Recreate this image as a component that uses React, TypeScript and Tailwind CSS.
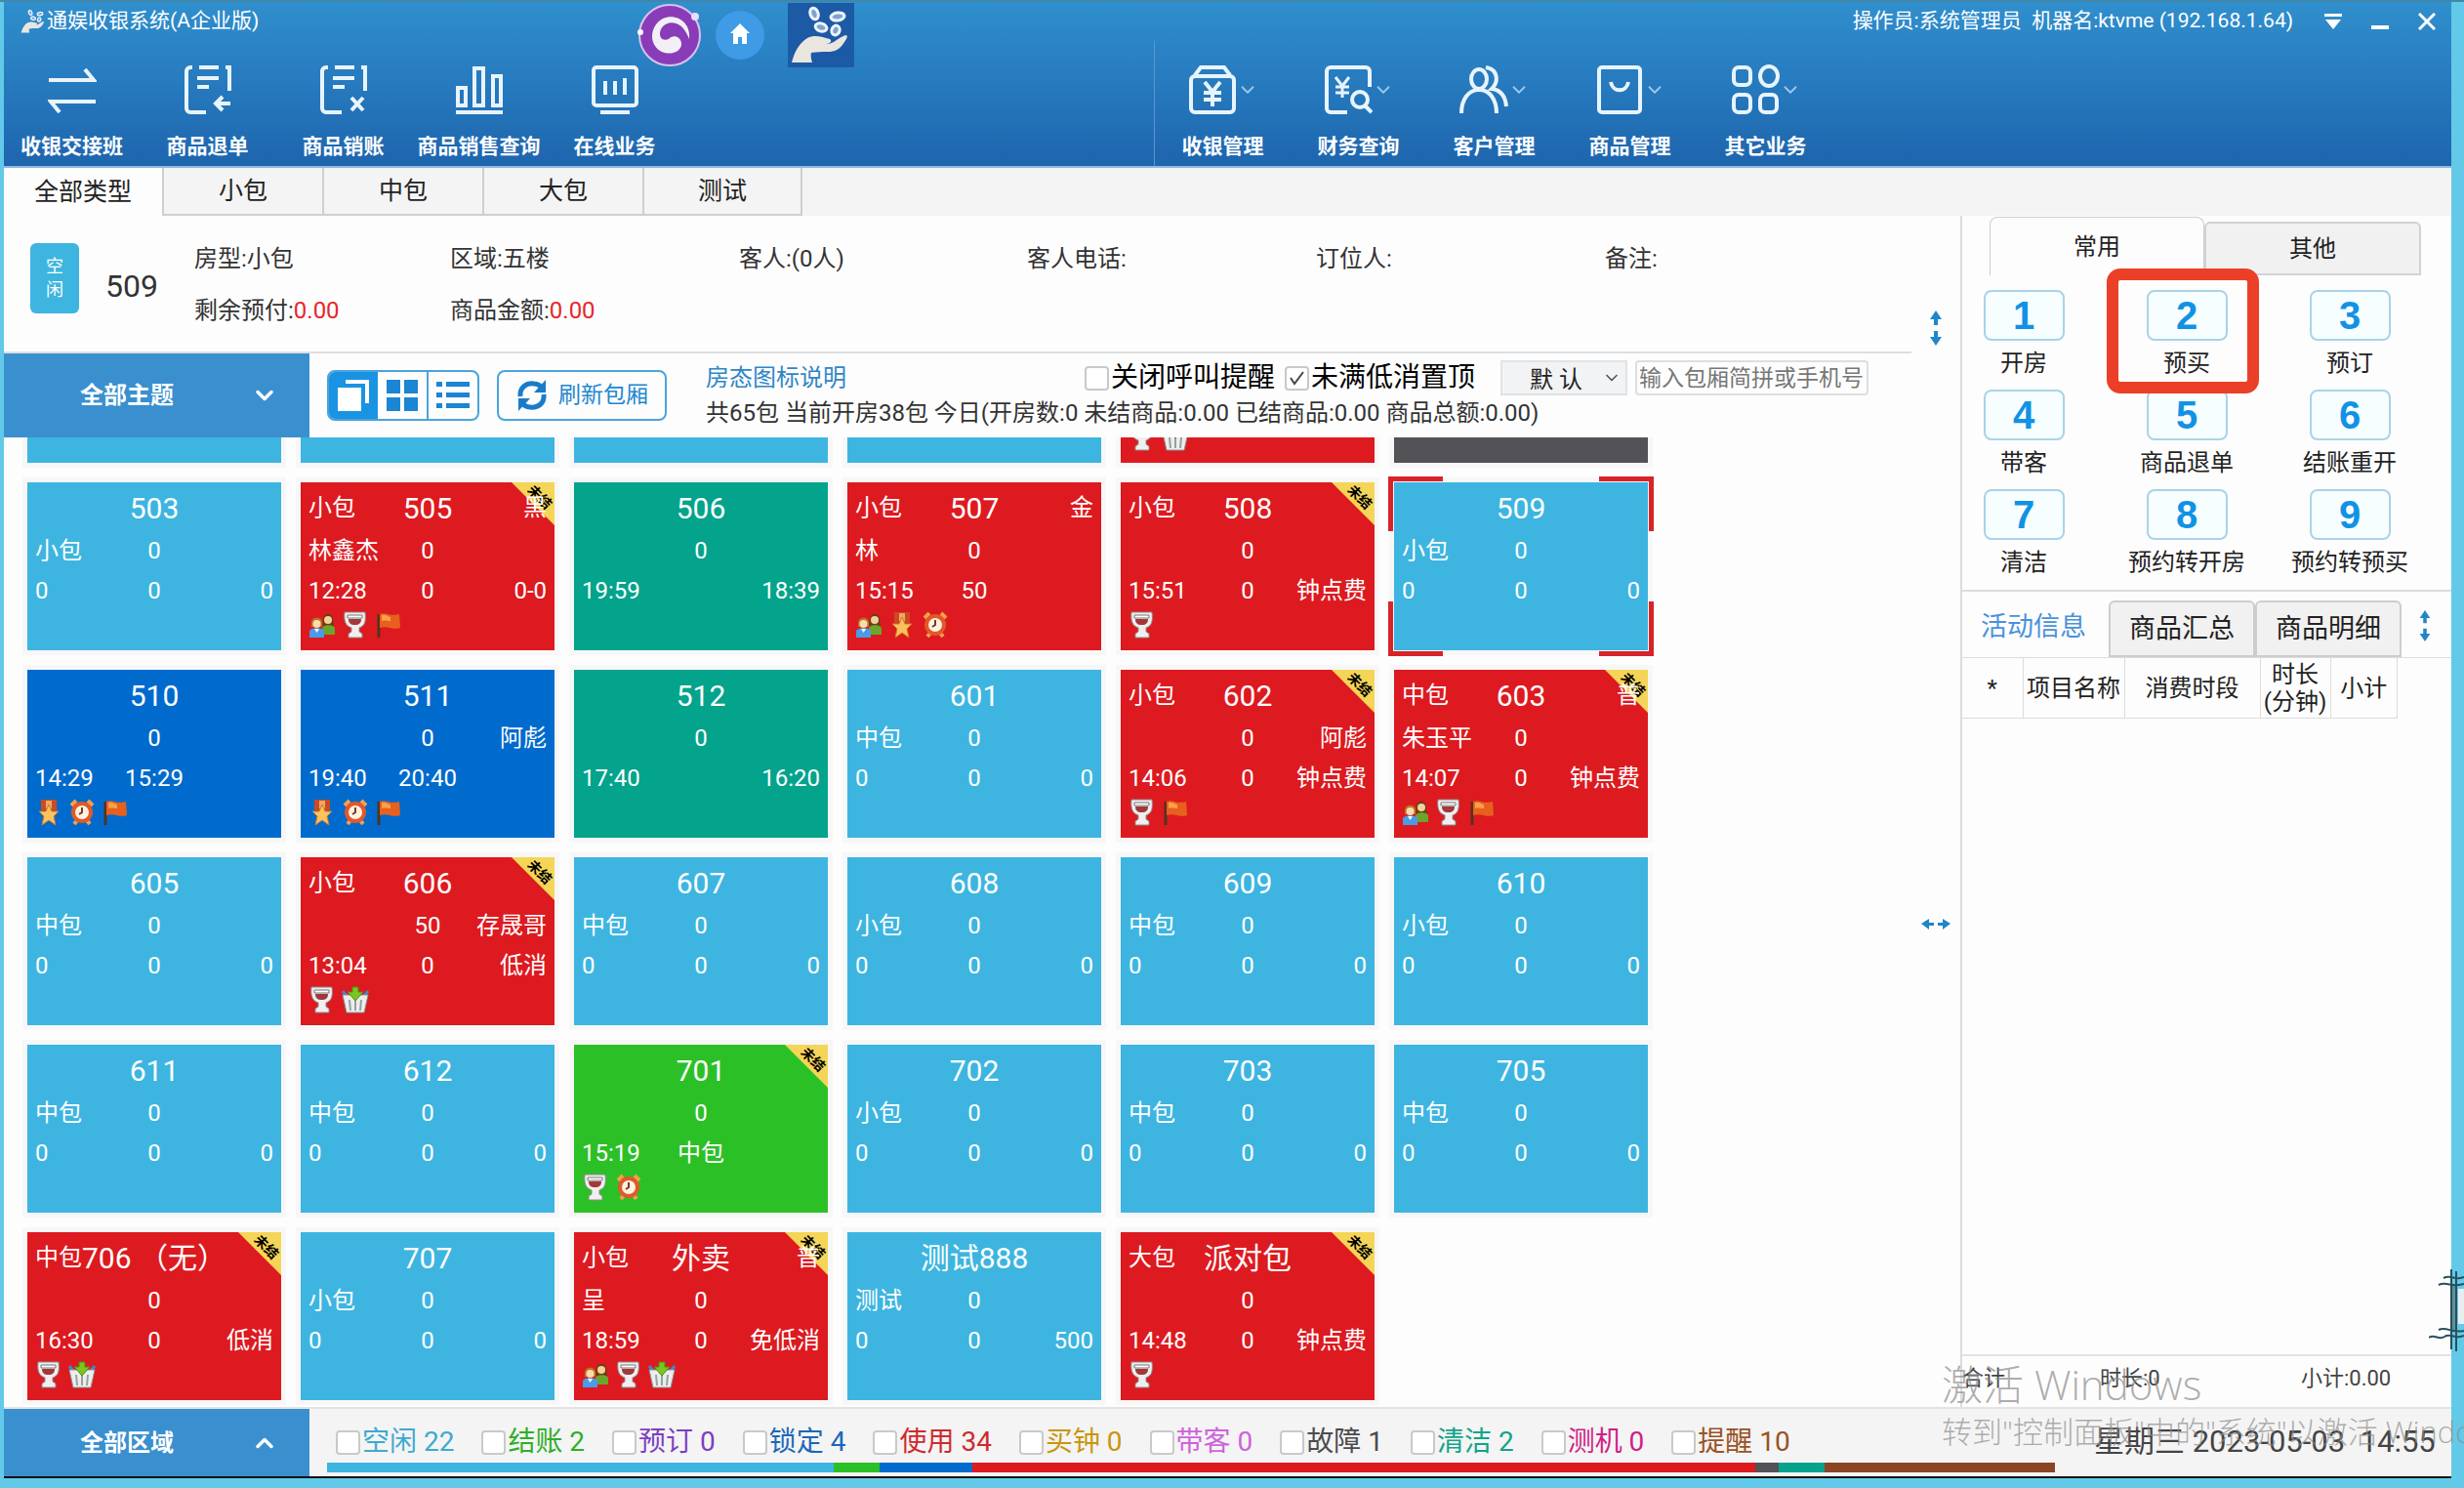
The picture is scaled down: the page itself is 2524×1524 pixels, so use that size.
import React from "react";
import { ChevronDown, ChevronUp } from "lucide-react";

type Tone = "idle" | "used" | "clean" | "locked" | "paid" | "broken";
type IconName = "people" | "wine" | "flag" | "medal" | "alarm" | "basket";

interface Room {
  tone: Tone;
  rows: [string, string, string][];
  icons?: IconName[];
  unpaid?: boolean;
  selected?: boolean;
}

const tones: Record<Tone, string> = {
  idle: "bg-[#3db5e0]",
  used: "bg-[#dd1a20]",
  clean: "bg-[#03a38c]",
  locked: "bg-[#006bcd]",
  paid: "bg-[#2cc027]",
  broken: "bg-[#535257]",
};

const rowHeights = ["h-[52px]", "h-[34px]", "h-[50px]"];

const idle = (name: string, type: string, last = "0"): Room => ({
  tone: "idle",
  rows: [
    ["", name, ""],
    [type, "0", ""],
    ["0", "0", last],
  ],
});

const rooms: Room[] = [
  { tone: "idle", rows: [] },
  { tone: "idle", rows: [] },
  { tone: "idle", rows: [] },
  { tone: "idle", rows: [] },
  { tone: "used", rows: [], icons: ["wine", "basket"] },
  { tone: "broken", rows: [] },

  idle("503", "小包"),
  {
    tone: "used",
    rows: [["小包", "505", "黑"], ["林鑫杰", "0", ""], ["12:28", "0", "0-0"]],
    icons: ["people", "wine", "flag"],
    unpaid: true,
  },
  { tone: "clean", rows: [["", "506", ""], ["", "0", ""], ["19:59", "", "18:39"]] },
  {
    tone: "used",
    rows: [["小包", "507", "金"], ["林", "0", ""], ["15:15", "50", ""]],
    icons: ["people", "medal", "alarm"],
  },
  {
    tone: "used",
    rows: [["小包", "508", ""], ["", "0", ""], ["15:51", "0", "钟点费"]],
    icons: ["wine"],
    unpaid: true,
  },
  { ...idle("509", "小包"), selected: true },

  {
    tone: "locked",
    rows: [["", "510", ""], ["", "0", ""], ["14:29", "15:29", ""]],
    icons: ["medal", "alarm", "flag"],
  },
  {
    tone: "locked",
    rows: [["", "511", ""], ["", "0", "阿彪"], ["19:40", "20:40", ""]],
    icons: ["medal", "alarm", "flag"],
  },
  { tone: "clean", rows: [["", "512", ""], ["", "0", ""], ["17:40", "", "16:20"]] },
  idle("601", "中包"),
  {
    tone: "used",
    rows: [["小包", "602", ""], ["", "0", "阿彪"], ["14:06", "0", "钟点费"]],
    icons: ["wine", "flag"],
    unpaid: true,
  },
  {
    tone: "used",
    rows: [["中包", "603", "普"], ["朱玉平", "0", ""], ["14:07", "0", "钟点费"]],
    icons: ["people", "wine", "flag"],
    unpaid: true,
  },

  idle("605", "中包"),
  {
    tone: "used",
    rows: [["小包", "606", ""], ["", "50", "存晟哥"], ["13:04", "0", "低消"]],
    icons: ["wine", "basket"],
    unpaid: true,
  },
  idle("607", "中包"),
  idle("608", "小包"),
  idle("609", "中包"),
  idle("610", "小包"),

  idle("611", "中包"),
  idle("612", "中包"),
  {
    tone: "paid",
    rows: [["", "701", ""], ["", "0", ""], ["15:19", "中包", ""]],
    icons: ["wine", "alarm"],
    unpaid: true,
  },
  idle("702", "小包"),
  idle("703", "中包"),
  idle("705", "中包"),

  {
    tone: "used",
    rows: [["中包", "706 （无）", ""], ["", "0", ""], ["16:30", "0", "低消"]],
    icons: ["wine", "basket"],
    unpaid: true,
  },
  idle("707", "小包"),
  {
    tone: "used",
    rows: [["小包", "外卖", "普"], ["呈", "0", ""], ["18:59", "0", "免低消"]],
    icons: ["people", "wine", "basket"],
    unpaid: true,
  },
  idle("测试888", "测试", "500"),
  {
    tone: "used",
    rows: [["大包", "派对包", ""], ["", "0", ""], ["14:48", "0", "钟点费"]],
    icons: ["wine"],
    unpaid: true,
  },
];

const statuses = [
  { name: "空闲", count: 22, text: "text-[#3fa9d0]", bar: "bg-[#3db5e0]" },
  { name: "结账", count: 2, text: "text-[#2fae2a]", bar: "bg-[#2cc027]" },
  { name: "预订", count: 0, text: "text-[#7d3fc4]", bar: "bg-[#7d3fc4]" },
  { name: "锁定", count: 4, text: "text-[#1c68b8]", bar: "bg-[#006bcd]" },
  { name: "使用", count: 34, text: "text-[#cf2a2e]", bar: "bg-[#dd1a20]" },
  { name: "买钟", count: 0, text: "text-[#c9960c]", bar: "bg-[#c9960c]" },
  { name: "带客", count: 0, text: "text-[#cf62dc]", bar: "bg-[#cf62dc]" },
  { name: "故障", count: 1, text: "text-[#4b4b4f]", bar: "bg-[#535257]" },
  { name: "清洁", count: 2, text: "text-[#12a389]", bar: "bg-[#03a38c]" },
  { name: "测机", count: 0, text: "text-[#d01f86]", bar: "bg-[#d01f86]" },
  { name: "提醒", count: 10, text: "text-[#9a5224]", bar: "bg-[#8b4524]" },
];

const shortcuts = ["开房", "预买", "预订", "带客", "商品退单", "结账重开", "清洁", "预约转开房", "预约转预买"];

const tileIcons: Record<IconName, React.ReactNode> = {
  people: (
    <>
      <path d="M15 8c0-7 10-7 10 0l1 7H14z" fill="#6b3f14" />
      <circle cx="20" cy="9" r="4" fill="#f6cf9a" />
      <path d="M14 24v-6c0-5 13-5 13 0v6z" fill="#6aa52c" />
      <path d="M3 12c0-7 11-7 11 0v4H3z" fill="#b8791f" />
      <circle cx="8.5" cy="13" r="4" fill="#fbdcae" />
      <path d="M1 27v-6c0-5 15-5 15 0v6z" fill="#4a9be8" />
      <path d="M6 18l2.5 4 2.5-4z" fill="#fff" />
    </>
  ),
  wine: (
    <>
      <path d="M3 1h21c1 9 0 14-6 16v4l3 2v4H7v-4l3-2v-4C4 15 2 10 3 1z" fill="#f0eeee" stroke="#8e8a8a" strokeWidth="1" />
      <path d="M6 4h15v3H6z" fill="#fff" stroke="#777" strokeWidth="1" />
      <path d="M7 8h13c0 4-2 6-6.500 6S7 12 7 8z" fill="#a3383a" />
    </>
  ),
  flag: (
    <>
      <path d="M4 3v24" stroke="#53341f" strokeWidth="3" />
      <path d="M5 3c6-3 9 3 20 0l1 14c-8 3-13-3-21 0z" fill="#e8601d" />
      <path d="M7 4c5-1 6 2 9 2v4c-4 0-5-1-9 0z" fill="#f8a04a" />
    </>
  ),
  medal: (
    <>
      <path d="M6 1h16v11H6z" fill="#c94b20" />
      <path d="M11 2h6v8h-6z" fill="#f0a765" />
      <path d="M14 6l3 7h7l-5 5 2 9-7-5-7 5 2-9-5-5h7z" fill="#fcc25e" stroke="#d87a25" strokeWidth="1" />
    </>
  ),
  alarm: (
    <>
      <path d="M3 7l5-5M25 7l-5-5M6 26l4-5M22 26l-4-5" stroke="#f4a04c" strokeWidth="4" />
      <circle cx="14" cy="14" r="11" fill="#e3582a" />
      <circle cx="14" cy="14" r="7" fill="#fff2e0" />
      <path d="M14 9v5l-3 2" stroke="#7a3a20" strokeWidth="2" fill="none" />
    </>
  ),
  basket: (
    <>
      <path d="M1 5l6 8M27 5l-6 8" stroke="#3f86d8" strokeWidth="3" />
      <path d="M1 9h26l-4 18H5z" fill="#eceeee" stroke="#8f9696" strokeWidth="1" />
      <path d="M8 14l1 11M14 14v11M20 14l-1 11" stroke="#98a0a0" strokeWidth="2" />
      <path d="M11 1h6v5h5l-8 9-8-9h5z" fill="#7ac520" stroke="#4b8f12" strokeWidth="1" />
    </>
  ),
};

const Glyph = ({ children }: { children: React.ReactNode }) => (
  <svg viewBox="0 0 50 52" className="h-[52px] w-[50px]" fill="none" stroke="#e8f4fd" strokeWidth="4">
    {children}
  </svg>
);

const leftMenu = [
  {
    label: "收银交接班",
    icon: <path d="M1 16h46L38 5M49 38H3l9 11" />,
  },
  {
    label: "商品退单",
    icon: <path d="M9 3H7a4 4 0 0 0-4 4v38a4 4 0 0 0 4 4h16M16 3h20M43 3h4v24M14 14h22M14 23h12M48 40H33M40 33l-7 7 7 7" />,
  },
  {
    label: "商品销账",
    icon: <path d="M9 3H7a4 4 0 0 0-4 4v38a4 4 0 0 0 4 4h16M16 3h20M43 3h4v24M14 14h22M14 23h12M33 34l12 13M45 34L33 47" />,
  },
  {
    label: "商品销售查询",
    icon: <path d="M3 24h8v18H3zM20 4h9v38h-9zM39 12h8v30h-8zM1 49h48" />,
  },
  {
    label: "在线业务",
    icon: <path d="M6 3h38a3 3 0 0 1 3 3v33a3 3 0 0 1-3 3H6a3 3 0 0 1-3-3V6a3 3 0 0 1 3-3zM15 17v14M25 17v14M35 14v17M10 49h30" />,
  },
];

const rightMenu = [
  {
    label: "收银管理",
    icon: <path d="M7 12h36a4 4 0 0 1 4 4v29a4 4 0 0 1-4 4H7a4 4 0 0 1-4-4V16a4 4 0 0 1 4-4zM7 11l6-8h24l6 8M17 18l8 10 8-10M25 28v15M16 29h18M16 36h18" />,
  },
  {
    label: "财务查询",
    icon: (
      <>
        <path d="M24 49H7a4 4 0 0 1-4-4V7a4 4 0 0 1 4-4h36a4 4 0 0 1 4 4v16" />
        <path d="M12 13l7 9 7-9M19 22v12M12 23h14M12 29h14" strokeWidth="3" />
        <circle cx="37" cy="36" r="8" />
        <path d="M42 42l7 7" />
      </>
    ),
  },
  {
    label: "客户管理",
    icon: (
      <>
        <ellipse cx="20" cy="15" rx="8" ry="10" />
        <path d="M2 50c0-14 7-24 18-24s18 10 18 24M27 3c12 2 14 14 6 22 9 1 14 8 15 18" />
      </>
    ),
  },
  {
    label: "商品管理",
    icon: <path d="M7 3h36a3 3 0 0 1 3 3v40a3 3 0 0 1-3 3H7a3 3 0 0 1-3-3V6a3 3 0 0 1 3-3zM16 18c2 11 16 11 18 0" />,
  },
  {
    label: "其它业务",
    icon: (
      <>
        <rect x="3" y="3" width="17" height="18" rx="5" />
        <ellipse cx="39" cy="12" rx="9" ry="10" />
        <rect x="3" y="31" width="17" height="18" rx="5" />
        <rect x="30" y="31" width="17" height="18" rx="5" />
      </>
    ),
  },
];

const HandCoins = ({ className }: { className: string }) => (
  <svg viewBox="0 0 68 66" className={className}>
    <path d="M4 61c3-12 9-21 16-25 8-4 15-1 23 1 3 2 0 5-4 5 7 1 12-6 20-9 3 0 2 3-1 7-5 8-10 10-17 10-6 0-11 0-17 1-1 3 0 7 1 10z" fill="#e9e6e0" />
    <g fill="#7fa3d0" stroke="#eef5fc" strokeWidth="3">
      <ellipse cx="27" cy="11" rx="4" ry="6" transform="rotate(-20 27 11)" />
      <ellipse cx="51" cy="14" rx="7" ry="4" transform="rotate(-8 51 14)" />
      <ellipse cx="34" cy="25" rx="6" ry="4" transform="rotate(15 34 25)" />
      <ellipse cx="49" cy="28" rx="4" ry="5" transform="rotate(20 49 28)" />
    </g>
  </svg>
);

const Header = () => (
  <header className="relative flex h-[170px] shrink-0 flex-col border-b-2 border-[#8fb9e6] bg-linear-to-b from-[#308fcd] to-[#1e65ae] text-white">
    <div className="flex h-10 items-center pr-4 text-[21px]">
      <HandCoins className="ml-4 h-7 w-7" />
      <h1 className="grow">通娱收银系统(A企业版)</h1>
      <span className="mr-8">操作员:系统管理员&nbsp; 机器名:ktvme (192.168.1.64)</span>
      <div className="flex items-center gap-[30px]">
        <button aria-label="菜单">
          <svg viewBox="0 0 18 18" className="size-[18px]" fill="#fff">
            <path d="M0 1h18v3H0zM1 7h16l-8 10z" />
          </svg>
        </button>
        <button aria-label="最小化">
          <svg viewBox="0 0 18 18" className="size-[18px]" fill="#fff">
            <path d="M0 13h18v4H0z" />
          </svg>
        </button>
        <button aria-label="关闭">
          <svg viewBox="0 0 18 18" className="size-[18px]" stroke="#fff" strokeWidth="3">
            <path d="M1 1l16 16M17 1L1 17" />
          </svg>
        </button>
      </div>
    </div>
    <div className="flex grow">
      <nav className="flex w-[1178px] pt-6">
        {leftMenu.map((m) => (
          <button key={m.label} className="flex w-[139px] flex-col items-center gap-[18px] text-[21px] leading-7 font-bold whitespace-nowrap">
            <Glyph>{m.icon}</Glyph>
            {m.label}
          </button>
        ))}
      </nav>
      <nav className="flex border-l border-[#5b95cf] pt-6">
        {rightMenu.map((m) => (
          <button key={m.label} className="flex w-[139px] flex-col items-center gap-[18px] text-[21px] leading-7 font-bold">
            <span className="flex items-center">
              <Glyph>{m.icon}</Glyph>
              <ChevronDown size={22} strokeWidth={2} className="text-[#9cc8ee]" />
            </span>
            {m.label}
          </button>
        ))}
      </nav>
    </div>
    <div className="absolute top-0 left-[648px] flex items-center">
      <svg viewBox="0 0 68 68" className="size-[68px]">
        <circle cx="34" cy="34" r="31" fill="#8a3cb8" stroke="#d9c3ee" strokeWidth="2" />
        <circle cx="60" cy="15" r="4" fill="#e8dcff" />
        <circle cx="4" cy="31" r="3" fill="#fff" />
        <path d="M54 38C56 20 40 11 27 17 14 24 12 42 24 50c10 6 23 1 22-8-1-7-9-9-13-4-7 3-11-3-8-10 4-8 14-9 21-3 4 4 6 8 8 13z" fill="#f2f0f6" />
      </svg>
      <svg viewBox="0 0 52 52" className="ml-3 size-[52px]">
        <circle cx="26" cy="26" r="25" fill="#3f9be6" />
        <path d="M26 14l10 10h-3v11h-5v-7h-4v7h-5V24h-3z" fill="#fff" />
      </svg>
      <HandCoins className="ml-[23px] h-[66px] w-[68px] bg-[#1d5aa6]" />
    </div>
  </header>
);

const Check = ({ label, text, checked }: { label: string; text?: string; checked?: boolean }) => (
  <label className={`relative flex items-center gap-0.5 text-[28px] leading-9 whitespace-nowrap ${text ?? "text-black"}`}>
    <input
      type="checkbox"
      defaultChecked={checked}
      className="peer size-[25px] appearance-none rounded-sm border-2 border-[#c9c9c9] bg-white"
    />
    <svg viewBox="0 0 25 25" className="pointer-events-none absolute left-0 hidden size-[25px] peer-checked:block" fill="none" stroke="#444" strokeWidth="2">
      <path d="M6 12l4 6 9-12" />
    </svg>
    {label}
  </label>
);

const Corner = ({ className }: { className: string }) => (
  <span className={`absolute h-14 w-14 border-[#d8232a] ${className}`} />
);

const RoomTile = ({ room }: { room: Room }) => (
  <div className={`relative flex h-[172px] flex-col text-[24px] text-white outline-[5px] outline-[#f7f7f7] ${tones[room.tone]}`}>
    {room.unpaid && (
      <div className="absolute top-0 right-0 size-[44px]">
        <div className="absolute inset-0 bg-[#f5d557] [clip-path:polygon(0_0,100%_0,100%_100%)]" />
        <span className="absolute top-2 left-[15px] rotate-45 text-[14px] leading-[14px] font-bold whitespace-nowrap text-black">未结</span>
      </div>
    )}
    {room.rows.map(([left, mid, right], i) => (
      <div key={i} className={`relative grid grid-cols-[1fr_auto_1fr] items-center px-2 whitespace-nowrap ${rowHeights[i]}`}>
        <span>{left}</span>
        <span className={i === 0 ? "text-[30px]" : ""}>{mid}</span>
        <span className="text-right">{right}</span>
      </div>
    ))}
    {room.icons && (
      <div className="absolute bottom-3 left-2 flex gap-1.5">
        {room.icons.map((name) => (
          <svg key={name} viewBox="0 0 28 28" className="size-7">
            {tileIcons[name]}
          </svg>
        ))}
      </div>
    )}
    {room.selected && (
      <>
        <Corner className="-top-1.5 -left-1.5 border-t-[5px] border-l-[5px]" />
        <Corner className="-top-1.5 -right-1.5 border-t-[5px] border-r-[5px]" />
        <Corner className="-bottom-1.5 -left-1.5 border-b-[5px] border-l-[5px]" />
        <Corner className="-right-1.5 -bottom-1.5 border-r-[5px] border-b-[5px]" />
      </>
    )}
  </div>
);

const SplitArrow = ({ className }: { className: string }) => (
  <svg viewBox="0 0 14 36" className={className} fill="#1f86c9">
    <path d="M7 0l6 9H9v6H5V9H1zM7 36l6-9H9v-6H5v6H1z" />
  </svg>
);

const RoomInfo = () => (
  <section className="flex h-[141px] shrink-0 border-b-2 border-[#dedede] text-[24px] text-[#333]">
    <div className="mt-7 ml-[27px] flex h-[72px] w-[50px] flex-col items-center justify-center rounded-md bg-[#3db5e0] text-[18px] leading-6 text-white">
      <span>空</span>
      <span>闲</span>
    </div>
    <strong className="mt-[52px] ml-[27px] w-[91px] text-[32px] leading-10 font-normal">509</strong>
    <dl className="mt-5 grid grow grid-cols-[262px_296px_295px_296px_296px_1fr] grid-rows-[48px_58px] items-center whitespace-nowrap">
      <div>房型:小包</div>
      <div>区域:五楼</div>
      <div>客人:(0人)</div>
      <div>客人电话:</div>
      <div>订位人:</div>
      <div>备注:</div>
      <div>
        剩余预付:<span className="text-[#e8252c]">0.00</span>
      </div>
      <div>
        商品金额:<span className="text-[#e8252c]">0.00</span>
      </div>
    </dl>
  </section>
);

const Toolbar = () => (
  <section className="flex h-[86px] shrink-0 items-center">
    <div className="relative flex h-full w-[313px] items-center bg-[#3a90cf] text-white">
      <select aria-label="主题" className="h-full w-full appearance-none pl-[78px] text-[24px] font-bold">
        <option>全部主题</option>
      </select>
      <ChevronDown size={28} strokeWidth={3} className="pointer-events-none absolute right-8" />
    </div>
    <div className="ml-[18px] flex h-[52px] w-[156px] overflow-hidden rounded-lg border-2 border-[#4ba3dc]">
      <button aria-label="大图" className="flex flex-1 items-center justify-center bg-[#1a94e2]">
        <svg viewBox="0 0 32 32" className="size-8">
          <path d="M8 0h24v24h-4V4H8z" fill="#fff" />
          <rect y="8" width="24" height="24" fill="#fff" />
        </svg>
      </button>
      <button aria-label="小图" className="flex flex-1 items-center justify-center">
        <svg viewBox="0 0 32 32" className="size-8" fill="#1a86d4">
          <path d="M0 0h14v14H0zM18 0h14v14H18zM0 18h14v14H0zM18 18h14v14H18z" />
        </svg>
      </button>
      <button aria-label="列表" className="flex flex-1 items-center justify-center border-l-2 border-[#4ba3dc]">
        <svg viewBox="0 0 34 28" className="h-7 w-[34px]" fill="#1a86d4">
          <path d="M0 0h6v5H0zM10 0h24v5H10zM0 11h6v5H0zM10 11h24v5H10zM0 22h6v5H0zM10 22h24v5H10z" />
        </svg>
      </button>
    </div>
    <button className="ml-[18px] flex h-[52px] w-[174px] items-center justify-center gap-2.5 rounded-lg border-2 border-[#4ba3dc] text-[23px] text-[#1f86cf]">
      <svg viewBox="0 0 34 34" className="size-[34px]">
        <path d="M5 18C4 9 11 4 19 5c3 0 5 1 7 3M29 16c1 9-6 14-14 13-3 0-5-1-7-3" fill="none" stroke="#1a7cc8" strokeWidth="5" />
        <path d="M31 1v13H19zM3 33V20h12z" fill="#1a7cc8" />
      </svg>
      刷新包厢
    </button>
    <div className="ml-10 flex grow flex-col">
      <div className="flex h-9 items-center">
        <a href="#legend" className="w-[388px] text-[24px] text-[#2f86c6]">
          房态图标说明
        </a>
        <Check label="关闭呼叫提醒" />
        <div className="ml-2.5">
          <Check label="未满低消置顶" checked />
        </div>
        <div className="relative ml-[26px] flex h-9 w-[130px] items-center">
          <select aria-label="排序" className="h-full w-full appearance-none border-2 border-[#e0e4e6] bg-[#f2f3f4] pl-7 text-[24px] text-[#222]">
            <option>默 认</option>
          </select>
          <ChevronDown size={20} className="pointer-events-none absolute right-1.5 text-[#555]" />
        </div>
        <input
          aria-label="搜索包厢"
          placeholder="输入包厢简拼或手机号"
          className="ml-2 h-9 w-[239px] rounded-sm border-2 border-[#dcdfe2] px-0.5 text-[23px] placeholder:text-[#777]"
        />
      </div>
      <p className="h-9 text-[24px] leading-9 whitespace-nowrap text-[#333]">
        共65包 当前开房38包 今日(开房数:0 未结商品:0.00 已结商品:0.00 商品总额:0.00)
      </p>
    </div>
  </section>
);

const SidePanel = () => (
  <aside className="flex w-[503px] shrink-0 flex-col border-l-2 border-[#dcdcdc] text-[24px] text-[#222]">
    <div className="flex h-[61px] items-end pl-7">
      <button className="h-[60px] w-[220px] rounded-t-lg border border-b-0 border-[#cfcfcf] bg-[#fdfdfd]">常用</button>
      <button className="h-[55px] w-[222px] rounded-t-md border-2 border-[#d2d2d2] bg-[#f1f1f1]">其他</button>
    </div>
    <div className="grid grid-cols-[repeat(3,120px)] justify-between gap-y-3 border-b-2 border-[#dcdcdc] pt-[15px] pr-[44px] pb-[13px] pl-[3px]">
      {shortcuts.map((label, i) => (
        <button key={label} className="relative flex flex-col items-center gap-2 leading-[30px] whitespace-nowrap">
          <span className="flex h-[52px] w-[83px] items-center justify-center rounded-lg border-2 border-[#a9d3e8] bg-[#f7feff] font-['Liberation_Sans'] text-[40px] font-bold text-[#1292e4]">
            {i + 1}
          </span>
          {label}
          {i === 1 && (
            <span className="absolute -top-[22px] -left-[22px] z-10 h-[128px] w-[156px] rounded-[14px] border-[12px] border-[#eb4027]" />
          )}
        </button>
      ))}
    </div>
    <div className="flex h-[68px] items-end border-b border-[#dcdcdc] text-[27px]">
      <button className="h-[62px] w-[150px] pr-1 text-[#4a90dc]">活动信息</button>
      <button className="h-[58px] w-[150px] rounded-t-md border-2 border-[#cdcdcd] bg-[#f1f1f1]">商品汇总</button>
      <button className="h-[58px] w-[150px] rounded-t-md border-2 border-[#cdcdcd] bg-[#f1f1f1]">商品明细</button>
      <SplitArrow className="mb-4 ml-[17px] h-8 w-3.5" />
    </div>
    <table className="h-[62px] w-[446px] table-fixed border-collapse text-center leading-7 whitespace-nowrap">
      <thead>
        <tr className="border-b border-[#dcdcdc]">
          <th className="w-[62px] border-r border-[#dcdcdc] font-normal">*</th>
          <th className="w-[104px] border-r border-[#dcdcdc] font-normal">项目名称</th>
          <th className="w-[139px] border-r border-[#dcdcdc] font-normal">消费时段</th>
          <th className="w-[72px] border-r border-[#dcdcdc] font-normal">
            时长
            <br />
            (分钟)
          </th>
          <th className="border-r border-[#dcdcdc] font-normal">小计</th>
        </tr>
      </thead>
    </table>
    <div className="grow" />
    <footer className="flex h-[54px] items-center border-t-2 border-[#e2e2e2] pb-2 text-[22px] text-[#444]">
      <span className="w-[141px]">合计</span>
      <span className="w-[206px]">时长:0</span>
      <span>小计:0.00</span>
    </footer>
  </aside>
);

const StatusBar = () => (
  <footer className="flex h-[71px] shrink-0 border-t-2 border-[#e4e2e2] bg-[#f4f4f4]">
    <div className="relative flex w-[313px] items-center bg-[#3a90cf] text-white">
      <select aria-label="区域" className="h-full w-full appearance-none pl-[78px] text-[24px] font-bold">
        <option>全部区域</option>
      </select>
      <ChevronUp size={28} strokeWidth={3} className="pointer-events-none absolute right-8" />
    </div>
    <div className="ml-[18px] flex grow flex-col justify-end pb-1">
      <div className="flex h-[42px] items-center gap-7 pl-[9px]">
        {statuses.map((s) => (
          <Check key={s.name} label={`${s.name} ${s.count}`} text={s.text} />
        ))}
      </div>
      <div className="flex h-2.5">
        {statuses.map((s) => (
          <div key={s.name} className={s.bar} style={{ flexGrow: s.count }} />
        ))}
      </div>
    </div>
    <time className="ml-10 w-[366px] pt-3.5 text-[31px] leading-10 whitespace-nowrap text-[#444]">星期三 2023-05-03&nbsp; 14:55</time>
  </footer>
);

export default function App() {
  return (
    <div className="relative flex h-screen flex-col overflow-hidden border-t-2 border-[#3f88ab] bg-[#62cae8] pr-[13px] pb-[10px] pl-1 font-[Roboto,'Noto_Sans_CJK_SC',sans-serif]">
      <Header />
      <div className="flex min-h-0 grow flex-col border-b-2 border-[#111] bg-[#fdfdfd]">
        <nav className="flex h-[49px] shrink-0 bg-[#f4f4f4] text-[25px] text-[#222]">
          <button className="w-[162px] bg-[#fdfdfd]">全部类型</button>
          {["小包", "中包", "大包", "测试"].map((t) => (
            <button key={t} className="w-[164px] border-b-2 border-l-2 border-[#cfcfcf] last:border-r-2">
              {t}
            </button>
          ))}
        </nav>
        <div className="flex min-h-0 grow">
          <div className="flex min-w-0 grow flex-col">
            <RoomInfo />
            <Toolbar />
            <main className="flex min-h-0 grow flex-col justify-end overflow-hidden pb-[7px] pl-6">
              <div className="grid grid-cols-[repeat(6,260px)] gap-5">
                {rooms.map((r, i) => (
                  <RoomTile key={i} room={r} />
                ))}
              </div>
            </main>
          </div>
          <div className="flex w-[50px] shrink-0 flex-col items-center">
            <div className="flex h-[141px] items-end pb-2">
              <SplitArrow className="h-9 w-3.5" />
            </div>
            <div className="flex grow items-center pt-[88px]">
              <svg viewBox="0 0 30 14" className="h-3.5 w-[30px]" fill="#1f86c9">
                <path d="M0 7l8-5v4h5v3H8v4zM30 7l-8-5v4h-5v3h5v4z" />
              </svg>
            </div>
          </div>
          <SidePanel />
        </div>
        <StatusBar />
      </div>

      <svg viewBox="0 0 36 86" className="absolute right-0 bottom-[138px] h-[86px] w-9" fill="none" stroke="#27505c" strokeWidth="2">
        <path d="M30 20h6v36h-6z" fill="#e8eef0" stroke="none" />
        <path d="M24 16h5v48h-5z" fill="#5f9096" stroke="none" />
        <path d="M23 0v82M28 2v82M15 9c8-4 12 3 21-1M10 16c8-4 14 3 26-1M10 62c8-4 14 4 26 1M0 70c6-4 10 3 16-1s12 3 20-1" />
      </svg>

      <div className="pointer-events-none absolute right-0 bottom-[34px] w-[535px] overflow-hidden font-['Open_Sans','Noto_Sans_CJK_SC',sans-serif] font-light whitespace-nowrap text-[#8a8a8a]/70">
        <p className="text-[42px] leading-[48px]">激活 Windows</p>
        <p className="text-[31px] leading-[48px]">转到"控制面板"中的"系统"以激活 Windows。</p>
      </div>
    </div>
  );
}
